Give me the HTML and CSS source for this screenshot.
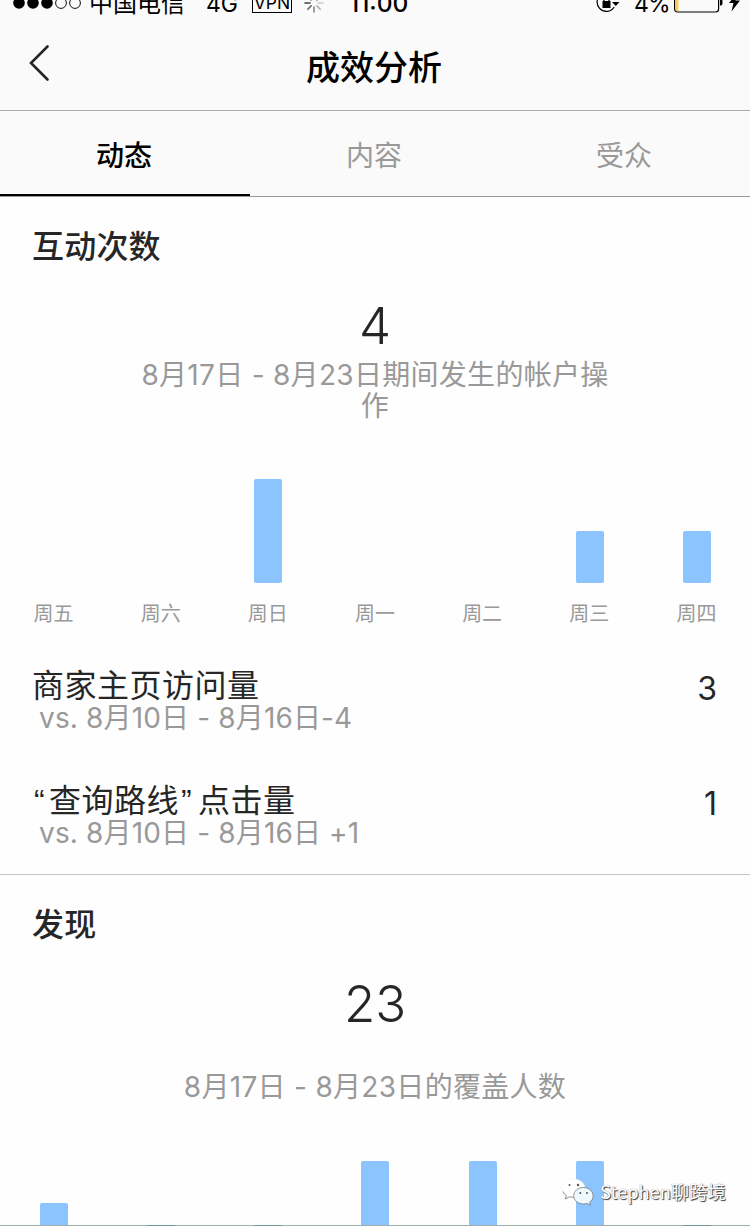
FILE: index.html
```html
<!DOCTYPE html>
<html lang="zh-CN">
<head>
<meta charset="utf-8">
<title>成效分析</title>
<link rel="stylesheet" href="styles.css">
</head>
<body>
<div class="screen">
  <header class="header">
    <div class="status">
      <svg class="signal" width="70" height="14" viewBox="0 0 70 14">
        <g fill="#000"><circle cx="6" cy="7" r="5.8"/><circle cx="20" cy="7" r="5.8"/><circle cx="34" cy="7" r="5.8"/></g>
        <g fill="none" stroke="#111" stroke-width="1"><circle cx="48" cy="7" r="5.4"/><circle cx="62" cy="7" r="5.4"/></g>
      </svg>
      <span class="carrier">中国电信</span>
      <span class="network">4G</span>
      <span class="vpn">VPN</span>
      <svg class="spinner" width="20" height="20" viewBox="0 0 20 20" stroke-width="1.6" stroke-linecap="round">
        <path d="M10 1v5M3.6 3.6l3.5 3.5M16.4 3.6l-3.5 3.5" stroke="#999"/>
        <path d="M1 10h5" stroke="#444"/><path d="M3.8 16.2l3.4-3.4" stroke="#666"/>
        <path d="M10 19v-5" stroke="#888"/><path d="M16.2 16.2l-3.4-3.4" stroke="#aaa"/><path d="M19 10h-5" stroke="#ccc"/>
      </svg>
      <span class="time">11:00</span>
      <svg class="lock" width="25" height="22" viewBox="0 0 25 22">
        <path d="M18.300 16A9.300 9.300 0 1 1 19.500 9" fill="none" stroke="#000" stroke-width="1.2"/>
        <path d="M6.500 10h8v7h-8z"/><path d="M8 10V7.500a2.500 2.500 0 0 1 5 0V10" fill="none" stroke="#000" stroke-width="1.300"/>
        <path d="M16 11h7.500l-3.700 4z"/>
      </svg>
      <span class="percent">4%</span>
      <svg class="battery" width="68" height="22" viewBox="0 0 68 22">
        <rect x="2" y="2" width="2.500" height="18" fill="#f7cf5e"/>
        <rect x=".6" y=".6" width="44" height="20.400" rx="3" fill="none" stroke="#000" stroke-width="1.200"/>
        <path d="M46 7.500h1q1.500 0 1.500 3.500t-1.500 3.500h-1z"/>
        <path d="M64 1L55 12h4.500L57.500 20.500 66 9.500h-4.500z"/>
      </svg>
    </div>
    <div class="navbar">
      <svg class="back" width="24" height="38" viewBox="0 0 24 38"><path d="M19.500 2.500L3 19 19.500 35.500" fill="none" stroke="#262626" stroke-width="2.600" stroke-linecap="round"/></svg>
      <h1 class="title">成效分析</h1>
    </div>
  </header>
  <nav class="tabs">
    <span class="tab tab-active">动态</span>
    <span class="tab">内容</span>
    <span class="tab">受众</span>
  </nav>

  <section class="section interactions">
    <h2 class="heading">互动次数</h2>
    <div class="total">4</div>
    <p class="caption">8月17日 - 8月23日期间发生的帐户操<br>作</p>
    <div class="chart chart-week">
      <div class="day"></div>
      <div class="day"></div>
      <div class="day"><i class="bar" style="height:104px"></i></div>
      <div class="day"></div>
      <div class="day"></div>
      <div class="day"><i class="bar" style="height:52px"></i></div>
      <div class="day"><i class="bar" style="height:52px"></i></div>
    </div>
    <div class="labels">
      <span>周五</span><span>周六</span><span>周日</span><span>周一</span><span>周二</span><span>周三</span><span>周四</span>
    </div>
    <div class="metric">
      <div>
        <div class="metric-name">商家主页访问量</div>
        <div class="metric-note">vs. 8月10日 - 8月16日-4</div>
      </div>
      <div class="metric-value">3</div>
    </div>
    <div class="metric">
      <div>
        <div class="metric-name"><span class="quote">“</span>查询路线<span class="quote quote-end">”</span>点击量</div>
        <div class="metric-note">vs. 8月10日 - 8月16日 +1</div>
      </div>
      <div class="metric-value">1</div>
    </div>
  </section>

  <section class="section discovery">
    <h2 class="heading">发现</h2>
    <div class="total">23</div>
    <p class="caption">8月17日 - 8月23日的覆盖人数</p>
    <div class="chart chart-cut">
      <div class="day"><i class="bar" style="height:22px"></i></div>
      <div class="day"><i class="bar bar-low"></i></div>
      <div class="day"><i class="bar bar-low"></i></div>
      <div class="day"><i class="bar" style="height:64px"></i></div>
      <div class="day"><i class="bar" style="height:64px"></i></div>
      <div class="day"><i class="bar" style="height:64px"></i></div>
      <div class="day"><i class="bar bar-low"></i></div>
    </div>
  </section>

  <div class="watermark">
    <svg width="34" height="28" viewBox="0 0 34 28">
      <path d="M12.500 1C6 1 1 5 1 10.200c0 3 1.700 5.600 4.300 7.300L4.500 21l4-2.200c1.300.4 2.600.6 4 .6C19 19.400 24 15.400 24 10.200S19 1 12.500 1z" fill="#fff" stroke="#e8e8e8" stroke-width=".4"/>
      <path d="M22.500 9.500c-5.600 0-9.800 3.700-9.800 8.300s4.200 8.200 9.800 8.200c1.200 0 2.400-.2 3.500-.5l3.400 1.800-.8-3c2.200-1.500 3.500-3.800 3.500-6.500 0-4.600-4.300-8.300-9.600-8.300z" fill="#effaff" stroke="#777" stroke-width=".8"/>
      <path d="M2 13.500q1 2.500 3.300 4L4.500 21l4-2.200 4 .6" fill="none" stroke="#777" stroke-width=".8"/>
      <g fill="#555"><circle cx="8.500" cy="7" r="1"/><circle cx="17" cy="7" r="1.200"/><circle cx="19.300" cy="15" r="1"/><circle cx="26" cy="15" r="1"/></g>
    </svg>
    <span>Stephen聊跨境</span>
  </div>
</div>
</body>
</html>
```
FILE: styles.css
```css
* { box-sizing: border-box; margin: 0; padding: 0; }
body { background: #fff; }
.screen {
  position: relative;
  width: 750px;
  height: 1228px;
  overflow: hidden;
  background: #fefefe;
  color: #262626;
  font-family: Inter, "Noto Sans CJK SC", sans-serif;
}
.header { height: 111px; background: #fafafa; border-bottom: 1px solid #aaa; overflow: hidden; }
.status {
  display: flex;
  align-items: center;
  height: 30px;
  margin-top: -12px;
  padding-left: 13px;
  color: #000;
  font-size: 24px;
  line-height: 30px;
  white-space: nowrap;
}
.signal { flex: none; margin-top: -1px; }
.carrier { width: 117px; padding: 1px 0 0 6px; }
.network { width: 46px; padding: 1px 0 0 6px; font-size: 23px; }
.vpn { width: 40px; height: 22px; margin: -3px 0 0 6px; border: 1px solid #000; font-size: 17.5px; line-height: 22px; text-align: center; }
.spinner { margin-left: 12px; flex: none; }
.time { width: 62px; margin-left: 25px; font-size: 24.5px; font-weight: 500; }
.lock { margin-left: 185px; margin-top: -3px; flex: none; }
.percent { width: 33px; margin-left: 13px; padding-top: 1px; font-size: 23px; letter-spacing: -.8px; }
.battery { margin: -3px 0 0 7px; flex: none; }
.navbar { display: flex; align-items: center; height: 92px; padding: 4px 28px 0; }
.back { flex: none; margin-top: -7px; }
.title { flex: 1; padding: 4px 26px 0 0; text-align: center; color: #000; font-size: 34px; line-height: 44px; font-weight: 500; }
.tabs { display: grid; grid-template-columns: repeat(3, 1fr); height: 86px; background: #fafafa; border-bottom: 1px solid #999; }
.tab { height: 85px; padding: 6px 2px 0 0; text-align: center; font-size: 28px; line-height: 78px; color: #999; border-bottom: 2px solid transparent; }
.tab-active { color: #000; font-weight: 500; border-bottom-color: #000; }
.heading { padding: 25px 32px 0; font-size: 32px; line-height: 50px; font-weight: 500; letter-spacing: .2px; }
.total { text-align: center; font-size: 51px; line-height: 60px; font-weight: 300; }
.caption { text-align: center; color: #999; font-size: 28px; line-height: 31px; letter-spacing: .3px; }
.chart { display: grid; grid-template-columns: repeat(7, 1fr); padding-left: .43px; margin-right: -.43px; }
.day { display: flex; align-items: flex-end; justify-content: center; }
.bar { width: 28px; border-radius: 2px; background: #8bc4ff; }
.labels { display: grid; grid-template-columns: repeat(7, 1fr); padding-top: 16px; text-align: center; font-size: 20px; line-height: 30px; color: #999; }
.interactions { height: 678px; border-bottom: 1px solid #c4c4c4; }
.interactions .total { margin-top: 24px; }
.interactions .caption { margin-top: 4px; }
.chart-week { height: 104px; margin-top: 57px; }
.metric { display: flex; justify-content: space-between; height: 115px; padding: 0 33px 0 32px; }
.labels + .metric { margin-top: 36px; }
.metric-name { height: 42px; font-size: 32px; line-height: 42px; letter-spacing: .5px; }
.metric-note { padding-left: 7px; margin-top: -5px; font-size: 28px; line-height: 32px; letter-spacing: .15px; color: #999; }
.metric-value { font-size: 32px; line-height: 48px; }
.quote { display: inline-block; width: 17px; padding-left: 2px; font-family: "Liberation Sans", sans-serif; line-height: 32px; }
.quote-end { width: 19px; }
.discovery .heading { padding-top: 25px; }
.discovery .total { margin-top: 24px; }
.discovery .caption { margin-top: 38px; }
.chart-cut { height: 65px; margin-top: 58px; border-bottom: 1px solid #9fb0ac; }
.chart-cut .bar { border-radius: 2px 2px 0 0; }
.bar.bar-low { height: 1px; margin-bottom: -1px; background: #6b9698; }
.watermark {
  position: absolute;
  left: 561px;
  top: 1178px;
  display: flex;
  align-items: center;
  gap: 5px;
  color: #fff;
  font-family: "Noto Sans CJK SC", sans-serif;
  font-size: 18.3px;
  line-height: 26px;
  text-shadow: 1px 1px 1px #333, 0 0 1px #888;
  white-space: nowrap;
}
.watermark span { margin-top: -3px; }
```
